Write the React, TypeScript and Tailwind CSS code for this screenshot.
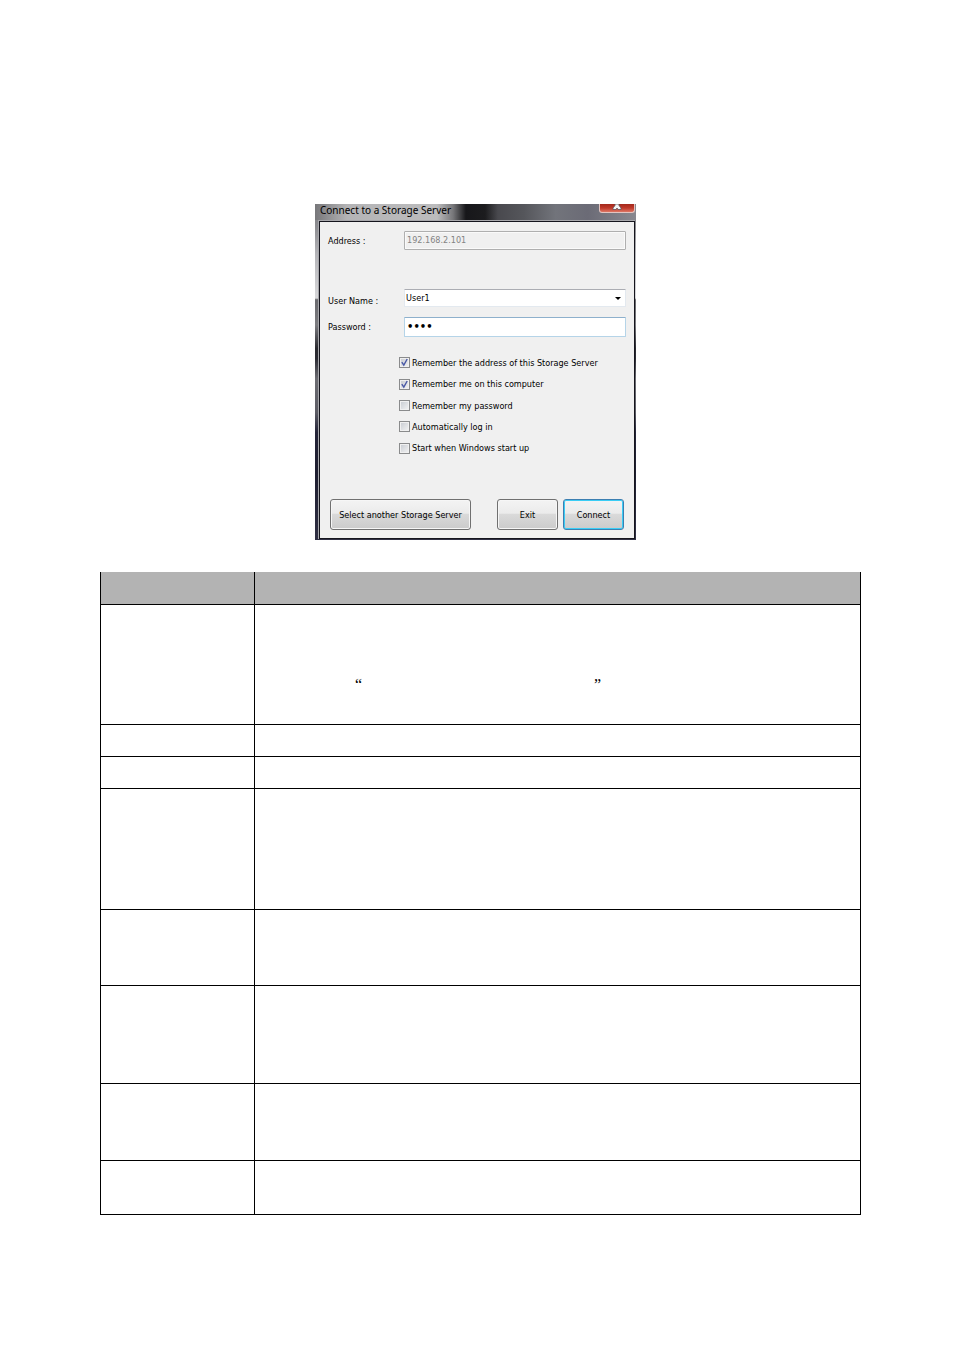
import { useState } from "react";

type Option = { id: string; label: string; checked: boolean };

const initialOptions: Option[] = [
  { id: "remember-address", label: "Remember the address of this Storage Server", checked: true },
  { id: "remember-me", label: "Remember me on this computer", checked: true },
  { id: "remember-password", label: "Remember my password", checked: false },
  { id: "auto-login", label: "Automatically log in", checked: false },
  { id: "start-up", label: "Start when Windows start up", checked: false },
];

const buttonFace =
  "h-[31px] rounded-[3px] border border-[#707070] bg-[linear-gradient(#f3f3f3,#ebebeb_46%,#dadada_48%,#cbcbcb)] text-center whitespace-nowrap shadow-[inset_0_0_0_1px_#f6f6f6]";

function CheckRow({ option, onToggle }: { option: Option; onToggle: () => void }) {
  return (
    <div className="flex flex-1 items-center gap-[2px]">
      <span className="relative flex size-[11px] shrink-0">
        <input
          id={option.id}
          type="checkbox"
          checked={option.checked}
          onChange={onToggle}
          className="size-[11px] appearance-none border border-[#8a8b8c] bg-[linear-gradient(135deg,#c6cad0,#f4f4f4)] shadow-[inset_0_0_0_1px_#f0f0f0]"
        />
        {option.checked && (
          <svg viewBox="0 0 11 11" className="pointer-events-none absolute inset-0 size-[11px]" aria-hidden="true">
            <path d="M2.8 5.2 4.8 8.2 8.2 2" fill="none" stroke="#4a5aa6" strokeWidth="1.4" />
          </svg>
        )}
      </span>
      <label htmlFor={option.id} className="whitespace-nowrap">
        {option.label}
      </label>
    </div>
  );
}

function CloseButton() {
  return (
    <button
      type="button"
      aria-label="Close"
      className="flex h-[9px] w-[36px] justify-center rounded-b-[3px] border border-t-0 border-[#e3c4c0] bg-[linear-gradient(#a3281b,#c0392a_50%,#dd7764)]"
    >
      <svg viewBox="0 0 10 6" className="h-[6px] w-[10px]" aria-hidden="true">
        <path d="M3 0H7V1.5L9 4V5.5H6L5 4 4 5.5H1V4L3 1.5Z" fill="#f4f4f4" stroke="#5d5560" strokeWidth="0.8" />
      </svg>
    </button>
  );
}

function ConnectDialog() {
  const [options, setOptions] = useState(initialOptions);
  const [password, setPassword] = useState("1234");
  const toggle = (id: string) =>
    setOptions((list) => list.map((o) => (o.id === id ? { ...o, checked: !o.checked } : o)));

  return (
    <section className="w-[321px] bg-[linear-gradient(#77777b,#8e8e92_7%,#b4b4b8_15%,#d8d8da_28%,#6a6a6e_28.5%,#7c7c80_36%,#2a2a30_43%,#2c2c34_46%,#6c6c72_52%,#5c5c64_62%,#242438_68%,#1e1e30_80%,#303044)] pr-px pb-px pl-[3px] text-[9px] leading-[14px] text-black">
      <header className="-mr-px -ml-[3px] flex h-[16px] items-start justify-between bg-[linear-gradient(90deg,#77777a,#b4b4b6_10%,#bcbcbd_38%,#77777a_43%,#17171a_47%,#1c1c1e_53%,#49494e_57%,#55565b_65%,#72747b_75%,#6b6b76_85%,#898990)] pr-px pl-[5px]">
        <h1 className="font-['Noto_Sans',sans-serif] text-[10px] leading-[12px] font-normal whitespace-nowrap">
          Connect to a Storage Server
        </h1>
        <CloseButton />
      </header>
      <div className="border-t border-l border-[#a8a8ac]">
        <form
          onSubmit={(e) => e.preventDefault()}
          className="border border-[#15151d] bg-[#f0f0f0] pt-[9px] pr-[8px] pb-[8px] pl-[8px]"
        >
          <div className="flex items-center">
            <label htmlFor="address" className="w-[76px] shrink-0">
              Address :
            </label>
            <input
              id="address"
              disabled
              value="192.168.2.101"
              readOnly
              className="h-[19px] min-w-0 flex-1 rounded-[1px] border border-[#afafaf] bg-[#f0f0f0] px-[2px] pb-px text-[#838383] shadow-[inset_0_0_0_1px_#fafafa]"
            />
          </div>
          <div className="mt-[39px] flex h-[18px] items-center">
            <label htmlFor="user" className="w-[76px] shrink-0 pt-[5px]">
              User Name :
            </label>
            <div className="relative flex-1">
              <select
                id="user"
                className="block h-[18px] w-full appearance-none rounded-[1px] border border-[#e3e9ef] border-t-[#abadb3] bg-white px-px"
              >
                <option>User1</option>
              </select>
              <svg viewBox="0 0 6 3" className="pointer-events-none absolute top-[8px] right-[5px] h-[3px] w-[6px]" aria-hidden="true">
                <path d="M0 0H6L3 3Z" fill="#000" />
              </svg>
            </div>
          </div>
          <div className="mt-[10px] flex items-center">
            <label htmlFor="password" className="w-[76px] shrink-0">
              Password :
            </label>
            <input
              id="password"
              type="password"
              value={password}
              onChange={(e) => setPassword(e.target.value)}
              className="h-[20px] min-w-0 flex-1 rounded-[1px] border border-[#b5d4e8] border-t-[#8eb0cc] bg-white px-[2px] pb-px font-['DejaVu_Sans',sans-serif] text-[10px] font-bold"
            />
          </div>
          <div className="mt-[15px] ml-[71px] flex h-[107px] flex-col">
            {options.map((o) => (
              <CheckRow key={o.id} option={o} onToggle={() => toggle(o.id)} />
            ))}
          </div>
          <div className="mt-[40px] flex gap-[5px] pr-[2px] pl-[2px]">
            <button type="button" className={`${buttonFace} mr-auto w-[141px]`}>
              Select another Storage Server
            </button>
            <button type="button" className={`${buttonFace} w-[61px]`}>
              Exit
            </button>
            <button
              type="submit"
              className="h-[31px] w-[61px] rounded-[3px] border border-[#3c7fb1] bg-[linear-gradient(#f3f3f3,#ebebeb_46%,#dadada_48%,#cbcbcb)] text-center shadow-[inset_0_0_0_1px_#3bcdf5]"
            >
              Connect
            </button>
          </div>
        </form>
      </div>
    </section>
  );
}

const cell = "border-r border-b border-black p-0";

const rows = [
  { height: "h-[120px]", quoted: true },
  { height: "h-[32px]", quoted: false },
  { height: "h-[32px]", quoted: false },
  { height: "h-[121px]", quoted: false },
  { height: "h-[76px]", quoted: false },
  { height: "h-[98px]", quoted: false },
  { height: "h-[77px]", quoted: false },
  { height: "h-[54px]", quoted: false },
];

function DescriptionTable() {
  return (
    <table className="w-full table-fixed border-separate border-spacing-0 border-l border-black">
      <colgroup>
        <col className="w-[154px]" />
        <col />
      </colgroup>
      <thead>
        <tr className="h-[33px] bg-[#b3b3b3]">
          <th className={cell} />
          <th className={cell} />
        </tr>
      </thead>
      <tbody>
        {rows.map((row, i) => (
          <tr key={i} className={row.height}>
            <td className={cell} />
            <td className={cell}>
              {row.quoted && (
                <div className="flex w-[346px] justify-between pt-[40px] pl-[100px] font-['Liberation_Serif',serif] text-[16px] leading-[20px]">
                  <span>“</span>
                  <span>”</span>
                </div>
              )}
            </td>
          </tr>
        ))}
      </tbody>
    </table>
  );
}

export default function App() {
  return (
    <main className="min-h-screen bg-white pt-[204px] pr-[93px] pb-[135px] pl-[100px] font-['DejaVu_Sans_Condensed','DejaVu_Sans',sans-serif]">
      <div className="mr-[10px] flex justify-center">
        <ConnectDialog />
      </div>
      <div className="mt-[32px]">
        <DescriptionTable />
      </div>
    </main>
  );
}
